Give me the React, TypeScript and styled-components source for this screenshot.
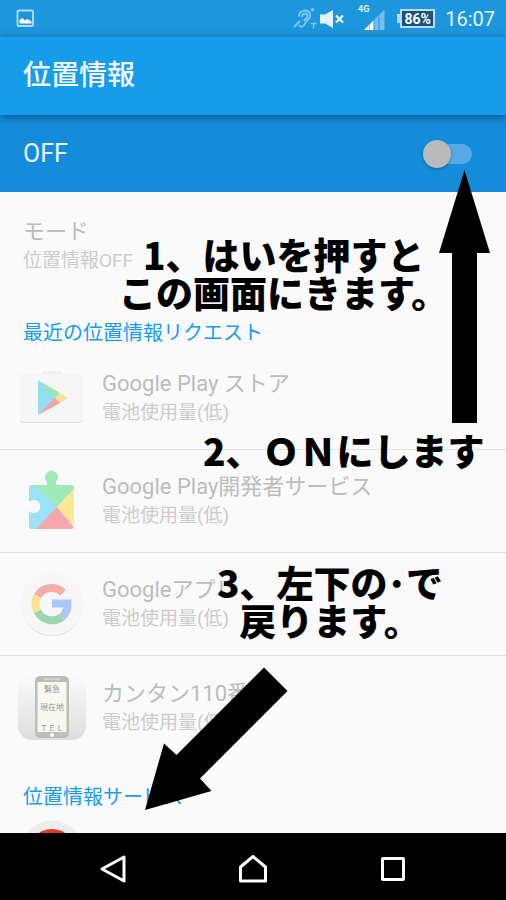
import React from "react";
import styled, { createGlobalStyle } from "styled-components";

const GlobalStyle = createGlobalStyle`
  * { box-sizing: border-box; }
  body {
    margin: 0;
    background: #fafafa;
    font-family: Roboto, "Noto Sans CJK JP", sans-serif;
  }
`;

const Screen = styled.div`
  position: relative;
  display: flex;
  flex-direction: column;
  height: 100vh;
  overflow: hidden;
`;

const StatusBar = styled.div`
  display: flex;
  align-items: center;
  flex: none;
  height: 37px;
  padding: 0 11px 0 16px;
  background: #1c96dc;
  color: #e6f5ff;
`;

const StatusSpacer = styled.div`
  flex: 1;
`;

const StatusIcons = styled.div`
  display: flex;
  align-items: center;
  gap: 3px;
`;

const SignalBox = styled.div`
  display: flex;
  margin-left: 13px;
  padding-bottom: 4px;
`;

const Battery = styled.div`
  position: relative;
  display: flex;
  align-items: center;
  justify-content: center;
  width: 35px;
  height: 19px;
  margin: 0 10px 0 14px;
  border: 2px solid #b9dcf3;
  background: #19527c;
  color: #fff;
  font-size: 14px;
  font-weight: 700;
  line-height: 16px;

  &::before {
    content: "";
    position: absolute;
    left: -5px;
    top: 3px;
    width: 3px;
    height: 9px;
    background: #b9dcf3;
  }
`;

const Clock = styled.span`
  font-size: 20px;
  line-height: 24px;
`;

const AppBar = styled.header`
  position: relative;
  z-index: 1;
  display: flex;
  align-items: center;
  flex: none;
  height: 78px;
  padding: 0 23px;
  background: #159dec;
  box-shadow: 0 2px 8px rgba(0, 30, 60, 0.5);
`;

const AppTitle = styled.h1`
  margin: 0;
  color: #f2faff;
  font-size: 28px;
  font-weight: 500;
  line-height: 36px;
`;

const SwitchBar = styled.label`
  display: flex;
  align-items: center;
  justify-content: space-between;
  flex: none;
  height: 77px;
  padding: 0 34px 0 23px;
  background: #158cda;
  color: #eaf6ff;
  font-size: 25px;
  line-height: 32px;
`;

const Toggle = styled.input`
  appearance: none;
  position: relative;
  width: 40px;
  height: 20px;
  margin: 0;
  border-radius: 10px;
  background: #56aae6;

  &::before {
    content: "";
    position: absolute;
    left: -9px;
    top: -4px;
    width: 28px;
    height: 28px;
    border-radius: 50%;
    background: #bababa;
    box-shadow: 0 1px 3px rgba(0, 0, 0, 0.3);
  }

  &:checked::before {
    left: 20px;
    background: #fff;
  }
`;

const Settings = styled.main`
  flex: 1;
  min-height: 0;
  overflow: hidden;
  background: #fafafa;
`;

const ModeRow = styled.div`
  display: flex;
  flex-direction: column;
  justify-content: center;
  height: 103px;
  padding: 4px 23px 0;
`;

const SectionTitle = styled.h2`
  height: 52px;
  margin: 0;
  padding: 24px 23px 0;
  color: #189cf0;
  font-size: 20px;
  font-weight: 400;
  line-height: 28px;
`;

const List = styled.ul`
  margin: 0;
  padding: 0;
  list-style: none;
`;

const Row = styled.li<{ $compact?: boolean }>`
  display: flex;
  align-items: center;
  gap: 16px;
  height: ${(p) => (p.$compact ? 86 : 103)}px;
  padding: 0 18px;

  &:not(:last-child) {
    border-bottom: 1px solid #dfdfdf;
  }
`;

const RowText = styled.div`
  display: flex;
  flex-direction: column;
`;

const RowTitle = styled.span`
  color: #bcbcbc;
  font-size: 22px;
  line-height: 30px;
  white-space: nowrap;
`;

const RowSub = styled.span`
  color: #cccccc;
  font-size: 19px;
  line-height: 28px;
  white-space: nowrap;
`;

const NavBar = styled.nav`
  display: grid;
  grid-template-columns: repeat(3, 1fr);
  flex: none;
  height: 67px;
  padding: 0 43px;
  background: #000;
`;

const NavButton = styled.button`
  display: flex;
  align-items: center;
  justify-content: center;
  padding: 4px 0 0;
  border: 0;
  background: none;
`;

const Note = styled.p<{ $left: number; $top: number }>`
  position: absolute;
  left: ${(p) => p.$left}px;
  top: ${(p) => p.$top}px;
  z-index: 2;
  margin: 0;
  color: #000;
  font-family: "Noto Sans CJK JP", sans-serif;
  font-size: 37px;
  font-weight: 900;
  line-height: 38px;
  text-align: center;
  white-space: nowrap;
`;

const Arrow = styled.svg<{ $left: number; $top: number }>`
  position: absolute;
  left: ${(p) => p.$left}px;
  top: ${(p) => p.$top}px;
  z-index: 2;
`;

const PictureIcon = () => (
  <svg width="19" height="19" viewBox="0 0 19 19" aria-hidden="true">
    <rect x="1.5" y="1.5" width="15.500" height="15.500" rx="1" fill="none" stroke="#b5dcf4" strokeWidth="1.800" />
    <path d="M3.500 14.500V11l3-2 2.500 2.500 2-1.500 2 1 2.500 1.500v2z" fill="#fff" />
  </svg>
);

const HearingIcon = () => (
  <svg width="24" height="22" viewBox="0 0 24 22" aria-hidden="true" fill="none" stroke="#86c5ec" strokeWidth="1.900">
    <path d="M6 8.500C6 4.500 9 2.500 12 2.500c4 0 6 3 5 6.500-1 3-4 3.500-5 6.500-1 3.500-4.500 4.500-6 1.500" />
    <path d="M9 9c0-2.500 1.500-3.500 3-3.500 2 0 3 1.500 2.500 3.500-.5 1.500-2.500 2-3.500 4" />
    <path d="M1 19l6-6" />
    <path d="M17.500 15.500h6M20.500 15.500v5" strokeWidth="1.500" />
    <circle cx="19.500" cy="1.800" r="0.800" />
  </svg>
);

const MuteIcon = () => (
  <svg width="25" height="20" viewBox="0 0 25 20" aria-hidden="true">
    <path d="M0 5.500h5l8-4.500v18l-8-4.500H0z" fill="#e3f3fd" />
    <path d="M16 6.500l7 7M23 6.500l-7 7" stroke="#e3f3fd" strokeWidth="2.400" />
  </svg>
);

const SignalIcon = () => (
  <svg width="28" height="28" viewBox="0 0 28 28" aria-hidden="true">
    <text x="0" y="9" fill="#e3f3fd" fontSize="9" fontWeight="700" fontFamily="Roboto, sans-serif">4G</text>
    <path d="M6 27l5-5v5z M11.500 21.500l4-4V27h-4z" fill="#fff" />
    <path d="M16.500 16.500l4-4V27h-4z M21.500 11.500l5-5V27h-5z" fill="#79beea" />
  </svg>
);

const PlayStoreIcon = () => (
  <svg width="68" height="68" viewBox="0 0 68 68" aria-hidden="true">
    <path d="M26 11V8.500h16V11" fill="none" stroke="#ebebeb" strokeWidth="2" />
    <path d="M2 10h63v45q0 4-4 4H6q-4 0-4-4z" fill="#dedede" />
    <path d="M2 10h63v44q0 4-4 4H6q-4 0-4-4z" fill="#f6f6f6" />
    <path d="M20 16v35l19-17z" fill="#93dfef" />
    <path d="M20 16l22 13-4 6z" fill="#9be8b5" />
    <path d="M20 51l22-12-4-6z" fill="#f2a1a5" />
    <path d="M42 29l8 5-8 5-5-5z" fill="#fbe195" />
  </svg>
);

const PlayServicesIcon = () => (
  <svg width="68" height="68" viewBox="0 0 68 68" aria-hidden="true">
    <defs>
      <clipPath id="puzzle">
        <path d="M14 18h15v-3a6.500 6.500 0 1 1 9 0v3h15q3 0 3 3v38q0 3-3 3H14q-3 0-3-3V44a6.500 6.500 0 1 0 0-9V21q0-3 3-3z" />
      </clipPath>
    </defs>
    <g clipPath="url(#puzzle)">
      <path d="M11 14v50h5l24-24-22-22z" fill="#9ce2f6" />
      <path d="M16 18l23 22 18-19V0H16z" fill="#9deab7" />
      <path d="M57 21v40L39 40z" fill="#fbe894" />
      <path d="M16 64l23-24 20 24z" fill="#f5a6ae" />
    </g>
  </svg>
);

const GoogleIcon = () => (
  <svg width="68" height="68" viewBox="0 0 68 68" aria-hidden="true">
    <circle cx="34" cy="35" r="31" fill="#d8d8d8" />
    <circle cx="34" cy="34" r="31.500" fill="#f7f7f7" />
    <g fill="none" strokeWidth="8">
      <path d="M19.500 26A16.500 16.500 0 0 1 45 22.500" stroke="#f3adaa" />
      <path d="M19.500 26a16.500 16.500 0 0 0 0 15.500" stroke="#fbe19a" />
      <path d="M19.500 41.500A16.500 16.500 0 0 0 44 47" stroke="#9ed6ae" />
      <path d="M44 47a16.500 16.500 0 0 0 5.500-13.500H34" stroke="#abc7f7" />
    </g>
  </svg>
);

const PhoneIcon = () => (
  <svg width="68" height="68" viewBox="0 0 68 68" aria-hidden="true">
    <defs>
      <linearGradient id="tile" x1="0" y1="0" x2="0" y2="1">
        <stop offset="0" stopColor="#fafafa" />
        <stop offset="1" stopColor="#dedede" />
      </linearGradient>
    </defs>
    <rect x="0" y="1" width="68" height="65" rx="14" fill="url(#tile)" />
    <rect x="17" y="2" width="34" height="62" rx="5" fill="#bdbdba" />
    <rect x="19.500" y="8" width="29" height="50" fill="#f8f8f1" />
    <path d="M26 5h16" stroke="#d9d9d9" strokeWidth="1.500" />
    <circle cx="34" cy="61" r="2" fill="#fafafa" />
    <g fill="#999" fontFamily="'Noto Sans CJK JP', sans-serif" fontSize="8" textAnchor="middle">
      <text x="34" y="18">緊急</text>
      <text x="34" y="36">現在地</text>
      <text x="34" y="57">ＴＥＬ</text>
    </g>
  </svg>
);

const ServiceIcon = () => (
  <svg width="68" height="68" viewBox="0 0 68 68" aria-hidden="true">
    <circle cx="34" cy="33" r="32.500" fill="#ededed" />
    <circle cx="34" cy="33" r="24" fill="#e03a2b" />
  </svg>
);

const requests = [
  { title: "Google Play ストア", icon: <PlayStoreIcon /> },
  { title: "Google Play開発者サービス", icon: <PlayServicesIcon /> },
  { title: "Googleアプリ", icon: <GoogleIcon /> },
  { title: "カンタン110番", icon: <PhoneIcon /> },
];

export default function App() {
  return (
    <Screen>
      <GlobalStyle />
      <StatusBar>
        <PictureIcon />
        <StatusSpacer />
        <StatusIcons>
          <HearingIcon />
          <MuteIcon />
        </StatusIcons>
        <SignalBox>
          <SignalIcon />
        </SignalBox>
        <Battery>86%</Battery>
        <Clock>16:07</Clock>
      </StatusBar>

      <AppBar>
        <AppTitle>位置情報</AppTitle>
      </AppBar>

      <SwitchBar>
        OFF
        <Toggle type="checkbox" role="switch" />
      </SwitchBar>

      <Settings>
        <ModeRow>
          <RowTitle>モード</RowTitle>
          <RowSub>位置情報OFF</RowSub>
        </ModeRow>
        <SectionTitle>最近の位置情報リクエスト</SectionTitle>
        <List>
          {requests.map((r) => (
            <Row key={r.title}>
              {r.icon}
              <RowText>
                <RowTitle>{r.title}</RowTitle>
                <RowSub>電池使用量(低)</RowSub>
              </RowText>
            </Row>
          ))}
        </List>
        <SectionTitle>位置情報サービス</SectionTitle>
        <List>
          <Row $compact>
            <ServiceIcon />
          </Row>
        </List>
      </Settings>

      <NavBar>
        <NavButton aria-label="戻る">
          <svg width="28" height="30" viewBox="0 0 28 30" fill="none" stroke="#fff" strokeWidth="3">
            <path d="M25 3v24L3 15z" strokeLinejoin="round" />
          </svg>
        </NavButton>
        <NavButton aria-label="ホーム">
          <svg width="30" height="30" viewBox="0 0 30 30" fill="none" stroke="#fff" strokeWidth="3">
            <path d="M2.500 27V13L15 2.500 27.500 13v14z" strokeLinejoin="round" />
          </svg>
        </NavButton>
        <NavButton aria-label="履歴">
          <svg width="26" height="26" viewBox="0 0 26 26" fill="none" stroke="#fff" strokeWidth="3">
            <rect x="2.500" y="2.500" width="21" height="21" rx="0.500" />
          </svg>
        </NavButton>
      </NavBar>

      <Note $left={119} $top={235}>
        1、はいを押すと
        <br />
        この画面にきます。
      </Note>
      <Note $left={203} $top={431}>2、ＯＮにします</Note>
      <Note $left={217} $top={563}>
        3、左下の･で
        <br />
        戻ります。
      </Note>

      <Arrow $left={439} $top={170} width="51" height="253" viewBox="0 0 51 253" aria-hidden="true">
        <path d="M25.500 0L51 83H38v170H13V83H0z" />
      </Arrow>
      <Arrow $left={145} $top={667} width="143" height="144" viewBox="0 0 143 144" aria-hidden="true">
        <path d="M0 143L19 76.500 31.500 88 119 0.500 142.500 24 55 111.500 66.500 124z" />
      </Arrow>
    </Screen>
  );
}
